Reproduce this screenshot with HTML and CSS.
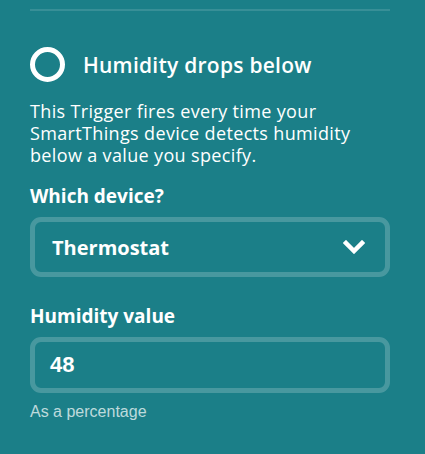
FILE: index.html
```html
<!DOCTYPE html>
<html>
<head>
<meta charset="utf-8">
<link rel="stylesheet" href="styles.css">
</head>
<body>
<div class="panel">
  <div class="sep"></div>
  <div class="head">
    <span class="ring"></span>
    <h2 class="title">Humidity drops below</h2>
  </div>
  <p class="desc">This Trigger fires every time your SmartThings device detects humidity below a value you specify.</p>
  <div class="label label-device">Which device?</div>
  <div class="select">
    <span class="select-text">Thermostat</span>
    <svg class="chev" width="22" height="14" viewBox="0 0 22 14"><polyline points="3,3 11,11 19,3" fill="none" stroke="#fff" stroke-width="4.5" stroke-linecap="square"/></svg>
  </div>
  <div class="label label-value">Humidity value</div>
  <div class="input"><span class="input-text">48</span></div>
  <div class="hint">As a percentage</div>
</div>
</body>
</html>
```
FILE: styles.css
```css
html, body {
  margin: 0;
  padding: 0;
  background: #1b7f88;
  height: 100%;
}
.panel {
  padding: 9px 35px 0 30px;
  color: #fff;
  font-family: "Open Sans", "Noto Sans", sans-serif;
}
.sep {
  height: 2px;
  background: rgba(255,255,255,0.13);
}
.head {
  display: flex;
  align-items: center;
  margin-top: 36px;
  height: 35px;
}
.ring {
  box-sizing: border-box;
  width: 35px;
  height: 35px;
  border: 5px solid #fff;
  border-radius: 50%;
  flex: none;
}
.title {
  margin: 0 0 0 18px;
  font-size: 21px;
  font-weight: 600;
  line-height: 26px;
  letter-spacing: 0.25px;
}
.desc {
  margin: 18px 0 0;
  font-size: 18px;
  line-height: 22px;
  letter-spacing: 0.35px;
}
.label {
  font-size: 19px;
  font-weight: 700;
  line-height: 24px;
}
.label-device { margin-top: 18px; }
.label-value { margin-top: 27px; }
.select, .input {
  box-sizing: border-box;
  display: flex;
  align-items: center;
  border: 5px solid rgba(255,255,255,0.2);
  border-radius: 11px;
  margin-top: 9px;
}
.select {
  height: 60px;
  padding: 0 20px 0 17px;
  justify-content: space-between;
}
.select-text {
  font-size: 20px;
  font-weight: 700;
}
.chev { display: block; }
.input {
  height: 56px;
  padding: 0 15px;
}
.input-text {
  font-family: "Liberation Sans", Arial, sans-serif;
  font-size: 22px;
  font-weight: 700;
}
.hint {
  margin-top: 10px;
  font-family: "Liberation Sans", Arial, sans-serif;
  font-size: 16px;
  line-height: 18px;
  color: rgba(255,255,255,0.72);
}
```
